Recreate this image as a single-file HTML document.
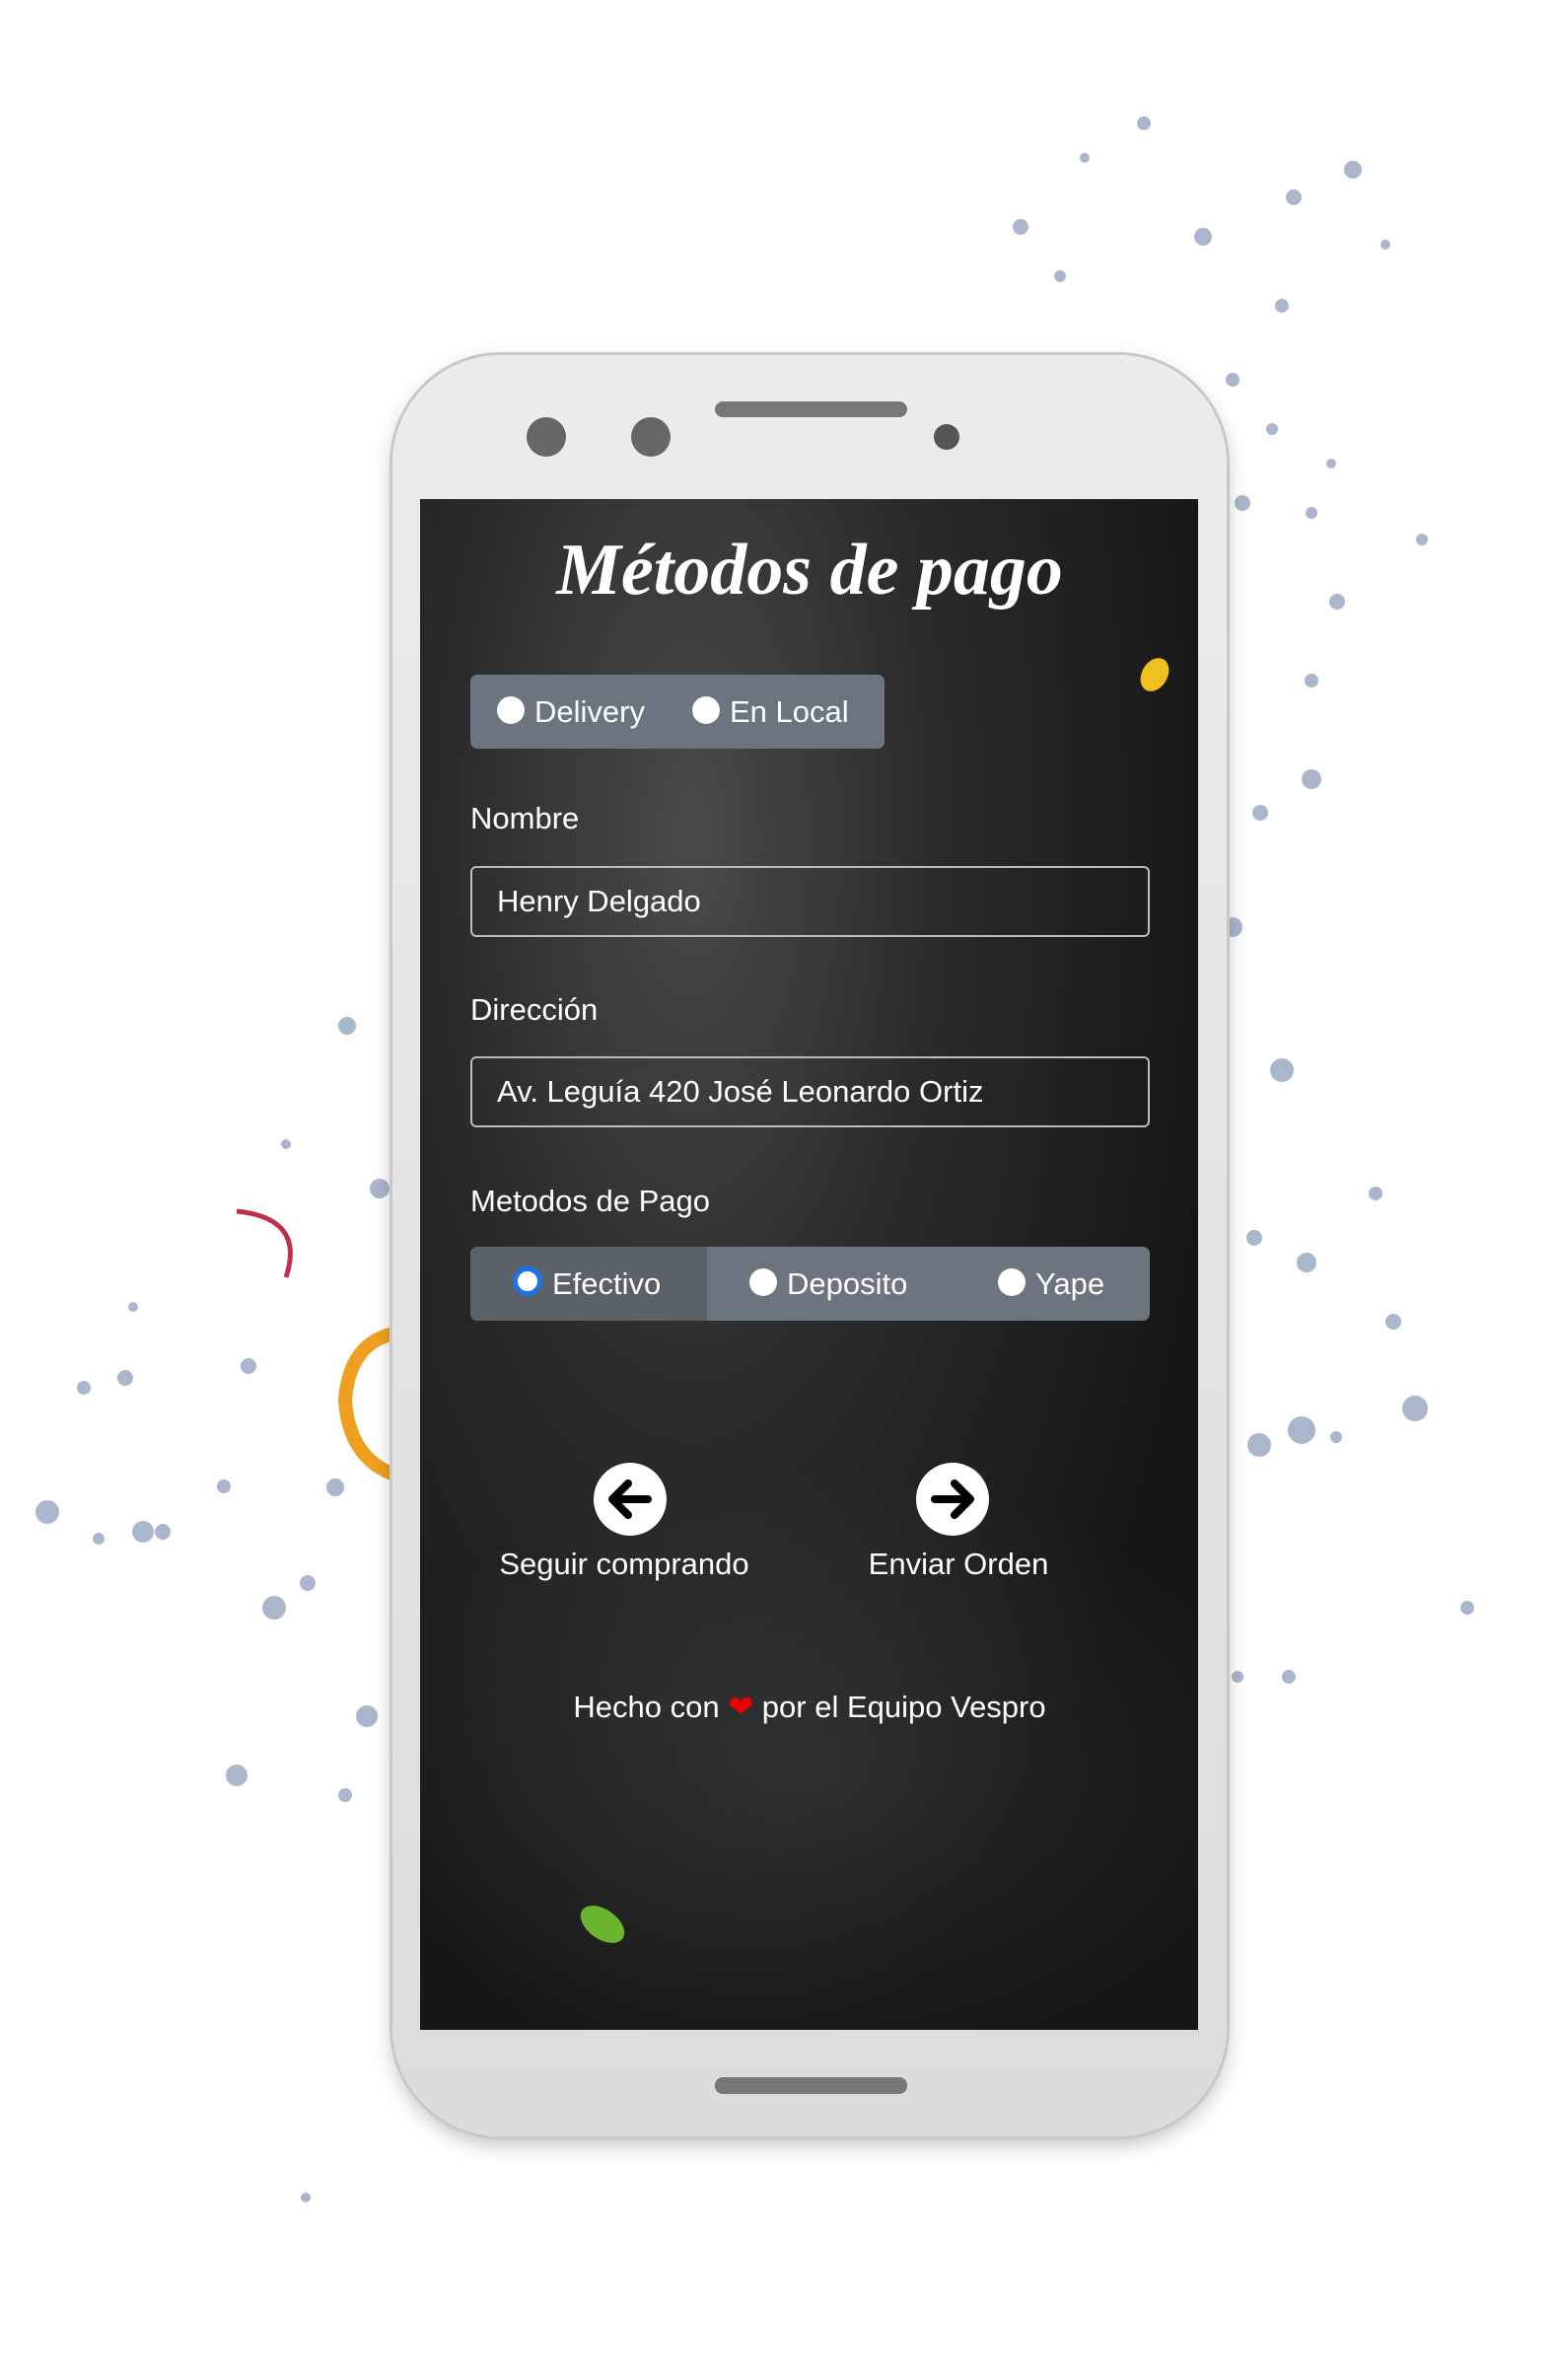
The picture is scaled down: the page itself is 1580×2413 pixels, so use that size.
<!DOCTYPE html>
<html><head><meta charset="utf-8"><style>
body{margin:0;width:1580px;height:2413px;background:#fff;position:relative;overflow:hidden;font-family:"Liberation Sans",sans-serif}
.abs{position:absolute}
.phone{left:398px;top:360px;width:846px;height:1806px;border-radius:110px;background:linear-gradient(#ececec,#dcdcdc);box-shadow:0 0 0 3px #c8c8c8,0 8px 20px rgba(0,0,0,.25)}
.screen{left:426px;top:506px;width:789px;height:1552px;background:radial-gradient(ellipse 60% 20% at 50% 83%,rgba(255,255,255,.08),rgba(0,0,0,0)),radial-gradient(ellipse at 35% 22%,#4a4a4a 0%,#2a2a2a 35%,#161616 75%);color:#fff}
.lbl{font-size:31px;color:#fff}
.inp{left:51px;width:689px;height:72px;border:2px solid #bbb;border-radius:6px;box-sizing:border-box;font-size:31px;padding-left:25px;line-height:68px}
.grp{background:#6c757d;border-radius:7px;font-size:31px}
.rad{display:inline-block;width:28px;height:28px;border-radius:50%;background:#fff;vertical-align:-2px;margin-right:10px}
</style></head><body>
<svg class="abs" style="left:0;top:0" width="1580" height="2413">
<g fill="#aab6cc">
<circle cx="1160" cy="125" r="7"/><circle cx="1100" cy="160" r="5"/><circle cx="1372" cy="172" r="9"/><circle cx="1312" cy="200" r="8"/><circle cx="1035" cy="230" r="8"/><circle cx="1220" cy="240" r="9"/><circle cx="1075" cy="280" r="6"/><circle cx="1300" cy="310" r="7"/><circle cx="1405" cy="248" r="5"/><circle cx="1250" cy="385" r="7"/><circle cx="1290" cy="435" r="6"/><circle cx="1260" cy="510" r="8"/><circle cx="1350" cy="470" r="5"/><circle cx="1330" cy="520" r="6"/><circle cx="1442" cy="547" r="6"/><circle cx="1356" cy="610" r="8"/><circle cx="1330" cy="690" r="7"/><circle cx="1330" cy="790" r="10"/><circle cx="1278" cy="824" r="8"/><circle cx="1250" cy="940" r="10"/><circle cx="1300" cy="1085" r="12"/><circle cx="1395" cy="1210" r="7"/><circle cx="1325" cy="1280" r="10"/><circle cx="1413" cy="1340" r="8"/><circle cx="1435" cy="1428" r="13"/><circle cx="1320" cy="1450" r="14"/><circle cx="1277" cy="1465" r="12"/><circle cx="1355" cy="1457" r="6"/><circle cx="1488" cy="1630" r="7"/><circle cx="1307" cy="1700" r="7"/><circle cx="1255" cy="1700" r="6"/><circle cx="1272" cy="1255" r="8"/>
<circle cx="352" cy="1040" r="9"/><circle cx="385" cy="1205" r="10"/><circle cx="252" cy="1385" r="8"/><circle cx="127" cy="1397" r="8"/><circle cx="85" cy="1407" r="7"/><circle cx="48" cy="1533" r="12"/><circle cx="145" cy="1553" r="11"/><circle cx="165" cy="1553" r="8"/><circle cx="227" cy="1507" r="7"/><circle cx="340" cy="1508" r="9"/><circle cx="278" cy="1630" r="12"/><circle cx="312" cy="1605" r="8"/><circle cx="372" cy="1740" r="11"/><circle cx="240" cy="1800" r="11"/><circle cx="350" cy="1820" r="7"/><circle cx="310" cy="2228" r="5"/><circle cx="290" cy="1160" r="5"/><circle cx="135" cy="1325" r="5"/><circle cx="100" cy="1560" r="6"/>
</g>
<path d="M240 1228 Q310 1235 290 1295" stroke="#c0304a" stroke-width="5" fill="none"/>
<path d="M420 1350 Q355 1350 350 1420 Q355 1490 420 1500" stroke="#f0a020" stroke-width="14" fill="none"/>
</svg>
<div class="abs phone"></div>
<div class="abs" style="left:725px;top:407px;width:195px;height:16px;border-radius:8px;background:#777"></div>
<div class="abs" style="left:534px;top:423px;width:40px;height:40px;border-radius:50%;background:#666"></div>
<div class="abs" style="left:640px;top:423px;width:40px;height:40px;border-radius:50%;background:#666"></div>
<div class="abs" style="left:947px;top:430px;width:26px;height:26px;border-radius:50%;background:#555"></div>
<div class="abs" style="left:725px;top:2106px;width:195px;height:17px;border-radius:8px;background:#777"></div>
<div class="abs screen">
 <div class="abs" style="left:0;width:790px;top:30px;text-align:center;font-family:'Liberation Serif',serif;font-style:italic;font-weight:bold;font-size:74px">Métodos de pago</div>
 <div class="abs grp" style="left:51px;top:178px;width:420px;height:75px;line-height:75px"><span style="margin-left:27px"><span class="rad"></span>Delivery</span><span style="margin-left:48px"><span class="rad"></span>En Local</span></div>
 <div class="abs lbl" style="left:51px;top:306px">Nombre</div>
 <div class="abs inp" style="top:372px">Henry Delgado</div>
 <div class="abs lbl" style="left:51px;top:500px">Dirección</div>
 <div class="abs inp" style="top:565px">Av. Leguía 420 José Leonardo Ortiz</div>
 <div class="abs lbl" style="left:51px;top:694px">Metodos de Pago</div>
 <div class="abs grp" style="left:51px;top:758px;width:689px;height:75px;line-height:75px;overflow:hidden">
  <div class="abs" style="left:0;top:0;width:240px;height:75px;background:#5a6268"></div>
  <span class="abs" style="left:43px"><span class="rad" style="background:#fff;border:5px solid #1a73e8;width:20px;height:20px"></span>Efectivo</span>
  <span class="abs" style="left:283px"><span class="rad"></span>Deposito</span>
  <span class="abs" style="left:535px"><span class="rad"></span>Yape</span>
 </div>
 <svg class="abs" style="left:175px;top:976px" width="76" height="76"><circle cx="38" cy="38" r="37" fill="#fff"/><path d="M56 38H22M36 22L20 38L36 54" stroke="#000" stroke-width="8" fill="none" stroke-linecap="round" stroke-linejoin="round"/></svg>
 <svg class="abs" style="left:502px;top:976px" width="76" height="76"><circle cx="38" cy="38" r="37" fill="#fff"/><path d="M20 38H54M40 22L56 38L40 54" stroke="#000" stroke-width="8" fill="none" stroke-linecap="round" stroke-linejoin="round"/></svg>
 <div class="abs lbl" style="left:57px;width:300px;text-align:center;top:1062px">Seguir comprando</div>
 <div class="abs lbl" style="left:396px;width:300px;text-align:center;top:1062px">Enviar Orden</div>
 <div class="abs lbl" style="left:0;width:790px;text-align:center;top:1207px">Hecho con <span style="color:#e00">❤</span> por el Equipo Vespro</div>
 <div class="abs" style="left:160px;top:1430px;width:50px;height:30px;border-radius:50%;background:#6bb52e;transform:rotate(35deg)"></div>
 <div class="abs" style="left:732px;top:160px;width:26px;height:36px;border-radius:50%;background:#f0c020;transform:rotate(30deg)"></div>
</div>
</body></html>
